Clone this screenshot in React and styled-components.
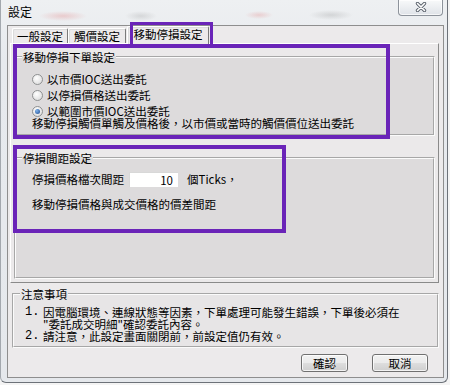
import React from 'react'
import styled, { createGlobalStyle } from 'styled-components'

const GlobalStyle = createGlobalStyle`
  html, body {
    margin: 0;
    padding: 0;
  }
  body {
    background: #f4f4f4;
    font-family: "Noto Sans CJK TC", "Liberation Sans", sans-serif;
    font-size: 12px;
    color: #000;
  }
`
const Window = styled.div`
  position: relative;
  box-sizing: border-box;
  width: 448px;
  height: 383px;
  display: flex;
  flex-direction: column;
  background: linear-gradient(to bottom, #eef0f2, #e7eaee 60px, #e5e8ec);
  border-left: 1px solid #a3a8ae;
  border-right: 1px solid #6d7279;
  border-bottom: 1px solid #6d7279;
  border-radius: 0 0 6px 6px;
  overflow: hidden;
`
const TitleBar = styled.div`
  flex: none;
  height: 25px;
  display: flex;
  align-items: flex-start;
  justify-content: space-between;
  padding: 0 4px 0 7px;
  background:
    radial-gradient(ellipse 24px 5px at 62px 16px, rgba(224, 110, 110, 0.28), transparent),
    radial-gradient(ellipse 16px 5px at 140px 16px, rgba(120, 120, 120, 0.2), transparent),
    radial-gradient(ellipse 14px 4px at 258px 15px, rgba(224, 110, 110, 0.25), transparent),
    radial-gradient(ellipse 22px 5px at 330px 15px, rgba(120, 120, 120, 0.22), transparent);
`
const Title = styled.span`
  line-height: 24px;
  font-size: 12px;
`
const CloseButton = styled.div`
  box-sizing: border-box;
  width: 45px;
  height: 16px;
  padding-bottom: 2px;
  display: flex;
  align-items: center;
  justify-content: center;
  border: 1px solid #8d939b;
  border-top: none;
  border-radius: 0 0 4px 4px;
  background: linear-gradient(#f8f9fa, #dfe3e8);
  box-shadow: inset 0 0 0 1px rgba(255, 255, 255, 0.7);
`
const Client = styled.div`
  flex: 1;
  display: flex;
  flex-direction: column;
  margin: 0 3px 4px 6px;
  padding: 0 4px 0 2px;
  border: 1px solid #8e8e8e;
  background: #eceaeb;
`
const TabStrip = styled.div`
  flex: none;
  height: 17px;
  display: flex;
  align-items: flex-start;
  padding-left: 2px;
  position: relative;
  z-index: 1;
`
const Tab = styled.div`
  box-sizing: border-box;
  width: ${p => p.$w}px;
  height: ${p => (p.$active ? 18 : 15)}px;
  margin-top: ${p => (p.$active ? 0 : 2)}px;
  margin-left: ${p => (p.$active ? 1 : 0)}px;
  border: 1px solid #fff;
  border-bottom: none;
  border-right-color: #7a7a7a;
  border-radius: 2px 2px 0 0;
  box-shadow: inset 1px 1px 0 #dcdcdc;
  background: #eceaeb;
  text-align: center;
  font-size: 11.5px;
  line-height: ${p => (p.$active ? 14 : 15)}px;
  white-space: nowrap;
`
const TabPage = styled.div`
  flex: none;
  box-sizing: border-box;
  height: 240px;
  display: flex;
  flex-direction: column;
  gap: 15px;
  padding: 6px 3px 3px 3px;
  border: 1px solid #8a8a8a;
  border-top-color: #fff;
  border-left-color: #fff;
  background: #ebe9ea;
`
const GroupBox = styled.fieldset`
  flex: ${p => (p.$grow ? 1 : 'none')};
  min-width: 0;
  margin: 0;
  padding: 0;
  border: 2px groove #fbfbfb;
  background: ${p => p.$bg || '#dddbdc'};
`
const Legend = styled.legend`
  margin-left: 6px;
  padding: 0 1px;
  font-size: 11.5px;
  line-height: 14px;
`
const GroupBody = styled.div`
  display: flex;
  flex-direction: column;
  padding: ${p => p.$pad};
`
const RadioRow = styled.label`
  display: flex;
  align-items: center;
  gap: 4px;
  height: 16px;
  font-size: 11.5px;
`
const RadioMark = styled.span`
  box-sizing: border-box;
  width: 11px;
  height: 11px;
  border-radius: 50%;
  border: 1px solid #8f9192;
  background: radial-gradient(circle at 40% 35%, #ffffff, #d6d6d6);
  display: inline-flex;
  align-items: center;
  justify-content: center;

  &::after {
    content: '';
    width: 5px;
    height: 5px;
    border-radius: 50%;
    background: ${p => (p.$checked ? 'radial-gradient(circle at 35% 35%, #7fb2ea, #1d4b91)' : 'transparent')};
  }
`
const Hint = styled.div`
  margin-top: -2px;
  font-size: 11.5px;
  line-height: 13px;
  white-space: nowrap;
`
const FieldRow = styled.div`
  display: flex;
  align-items: center;
  height: 18px;
  margin-top: ${p => p.$gap || 0}px;
  font-size: 11.5px;
  white-space: nowrap;
`
const NumberBox = styled.div`
  box-sizing: border-box;
  width: 49px;
  height: 15px;
  margin: 0 9px 0 5px;
  padding-right: 5px;
  background: #fff;
  border-top: 1px solid #d8d8d8;
  border-left: 1px solid #d8d8d8;
  text-align: right;
  line-height: 14px;
`
const NoteList = styled.div`
  display: grid;
  grid-template-columns: 18px 1fr;
  font-size: 11.5px;
  line-height: 12px;
  white-space: nowrap;
`
const NoteNum = styled.span`
  font-family: "Liberation Mono", monospace;
  font-size: 12px;
`
const ButtonRow = styled.div`
  display: flex;
  justify-content: flex-end;
  gap: 24px;
  margin: 6px 11px 0 0;
`
const Button = styled.div`
  box-sizing: border-box;
  width: ${p => p.$w}px;
  height: 18px;
  border: 1px solid #707070;
  border-radius: 3px;
  background: linear-gradient(#f2f2f2 0%, #ebebeb 48%, #dddddd 52%, #cfcfcf 100%);
  box-shadow: inset 0 0 0 1px rgba(255, 255, 255, 0.75);
  text-align: center;
  font-size: 11.5px;
  line-height: 16px;
`
const Mark = styled.div`
  position: absolute;
  left: ${p => p.$x}px;
  top: ${p => p.$y}px;
  width: ${p => p.$w}px;
  height: ${p => p.$h}px;
  box-sizing: border-box;
  border: ${p => p.$t}px solid #6a24b8;
  pointer-events: none;
  z-index: 2;
`

function CloseGlyph() {
  return (
    <svg width="12" height="10" viewBox="0 0 12 10">
      <path d="M2.5 1.5 L9.5 8.5 M9.5 1.5 L2.5 8.5" stroke="#5b626c" strokeWidth="3.4" strokeLinecap="round" />
      <path d="M2.5 1.5 L9.5 8.5 M9.5 1.5 L2.5 8.5" stroke="#fff" strokeWidth="1.6" strokeLinecap="round" />
    </svg>
  )
}

function Radio({ checked, children }) {
  return (
    <RadioRow>
      <RadioMark $checked={checked} />
      {children}
    </RadioRow>
  )
}

export default function App() {
  return (
    <>
      <GlobalStyle />
      <Window>
        <TitleBar>
          <Title>設定</Title>
          <CloseButton>
            <CloseGlyph />
          </CloseButton>
        </TitleBar>
        <Client>
          <TabStrip>
            <Tab $w={56}>一般設定</Tab>
            <Tab $w={58}>觸價設定</Tab>
            <Tab $w={82} $active>移動停損設定</Tab>
          </TabStrip>
          <TabPage>
            <GroupBox>
              <Legend>移動停損下單設定</Legend>
              <GroupBody $pad="7px 0 4px 16px">
                <Radio>以市價IOC送出委託</Radio>
                <Radio>以停損價格送出委託</Radio>
                <Radio checked>以範圍市價IOC送出委託</Radio>
                <Hint>移動停損觸價單觸及價格後，以市價或當時的觸價價位送出委託</Hint>
              </GroupBody>
            </GroupBox>
            <GroupBox $grow>
              <Legend>停損間距設定</Legend>
              <GroupBody $pad="5px 0 0 16px">
                <FieldRow>
                  停損價格檔次間距
                  <NumberBox>10</NumberBox>
                  個Ticks，
                </FieldRow>
                <FieldRow $gap={7}>移動停損價格與成交價格的價差間距</FieldRow>
              </GroupBody>
            </GroupBox>
          </TabPage>
          <GroupBox $bg="#e7e5e6" style={{ marginTop: 4, marginLeft: 2 }}>
            <Legend>注意事項</Legend>
            <GroupBody $pad="5px 0 4px 11px">
              <NoteList>
                <NoteNum>1.</NoteNum>
                <span>因電腦環境、連線狀態等因素，下單處理可能發生錯誤，下單後必須在</span>
                <span />
                <span>"委託成交明細"確認委託內容。</span>
                <NoteNum>2.</NoteNum>
                <span>請注意，此設定畫面關閉前，前設定值仍有效。</span>
              </NoteList>
            </GroupBody>
          </GroupBox>
          <ButtonRow>
            <Button $w={47}>確認</Button>
            <Button $w={56}>取消</Button>
          </ButtonRow>
        </Client>
        <Mark $x={129} $y={22} $w={83} $h={26} $t={3} />
        <Mark $x={12} $y={44} $w={377} $h={95} $t={4} />
        <Mark $x={12} $y={145} $w={273} $h={88} $t={4} />
      </Window>
    </>
  )
}
